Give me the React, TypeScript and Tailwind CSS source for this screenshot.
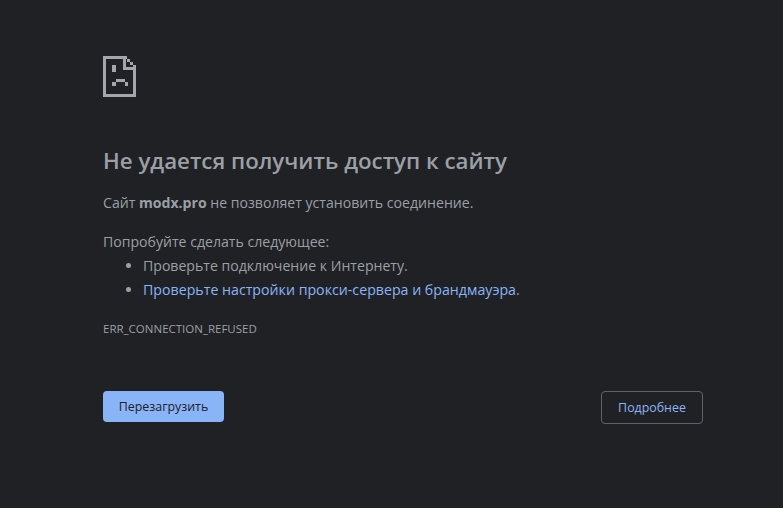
export default function App() {
  return (
    <div className="h-[508px] w-[783px] overflow-hidden bg-[#202124] pl-[103px] pr-[80px] pt-[56px] text-[14.1px] text-[#9aa0a6] [font-family:'Open_Sans','Noto_Sans',sans-serif]">
      <svg width="33" height="41" viewBox="0 0 33 41" fill="none" className="block" shapeRendering="crispEdges">
        <path d="M0 0H20V3H3V38H30V14H33V41H0Z" fill="#a3a7ab" />
        <path d="M20 0H24V3H27V6H30V9H33V14H20ZM23 3V11H30V9H27V6H24V3Z" fill="#a3a7ab" fillRule="evenodd" />
        <path d="M9 9H13V16H9ZM13 23H22V26H13ZM9 26H13V30H9ZM22 26H25V30H22Z" fill="#a3a7ab" />
      </svg>
      <h1 className="mt-[48px] text-[22.3px] font-semibold leading-[32px] text-[#9aa0a6]">Не удается получить доступ к сайту</h1>
      <p className="mt-[14px] leading-[24px]">
        Сайт <b className="font-bold">modx.pro</b> не позволяет установить соединение.
      </p>
      <p className="mt-[15px] leading-[24px]">Попробуйте сделать следующее:</p>
      <ul className="list-disc pl-[40px] leading-[24px]">
        <li>Проверьте подключение к Интернету.</li>
        <li>
          <span className="text-[14.2px] text-[#8ab4f8]">Проверьте настройки прокси-сервера и брандмауэра</span>.
        </li>
      </ul>
      <div className="mt-[18px] text-[11.5px] leading-[18px]">ERR_CONNECTION_REFUSED</div>
      <div className="mt-[53px] flex w-[600px] items-start justify-between">
        <button className="h-[31px] w-[121px] rounded-[4px] bg-[#8ab4f8] pt-[2px] text-[12.4px] text-[#202124]">Перезагрузить</button>
        <button className="h-[33px] w-[102px] rounded-[4px] border border-[#5f6368] pt-[1px] text-[12.4px] text-[#8ab4f8]">Подробнее</button>
      </div>
    </div>
  );
}
